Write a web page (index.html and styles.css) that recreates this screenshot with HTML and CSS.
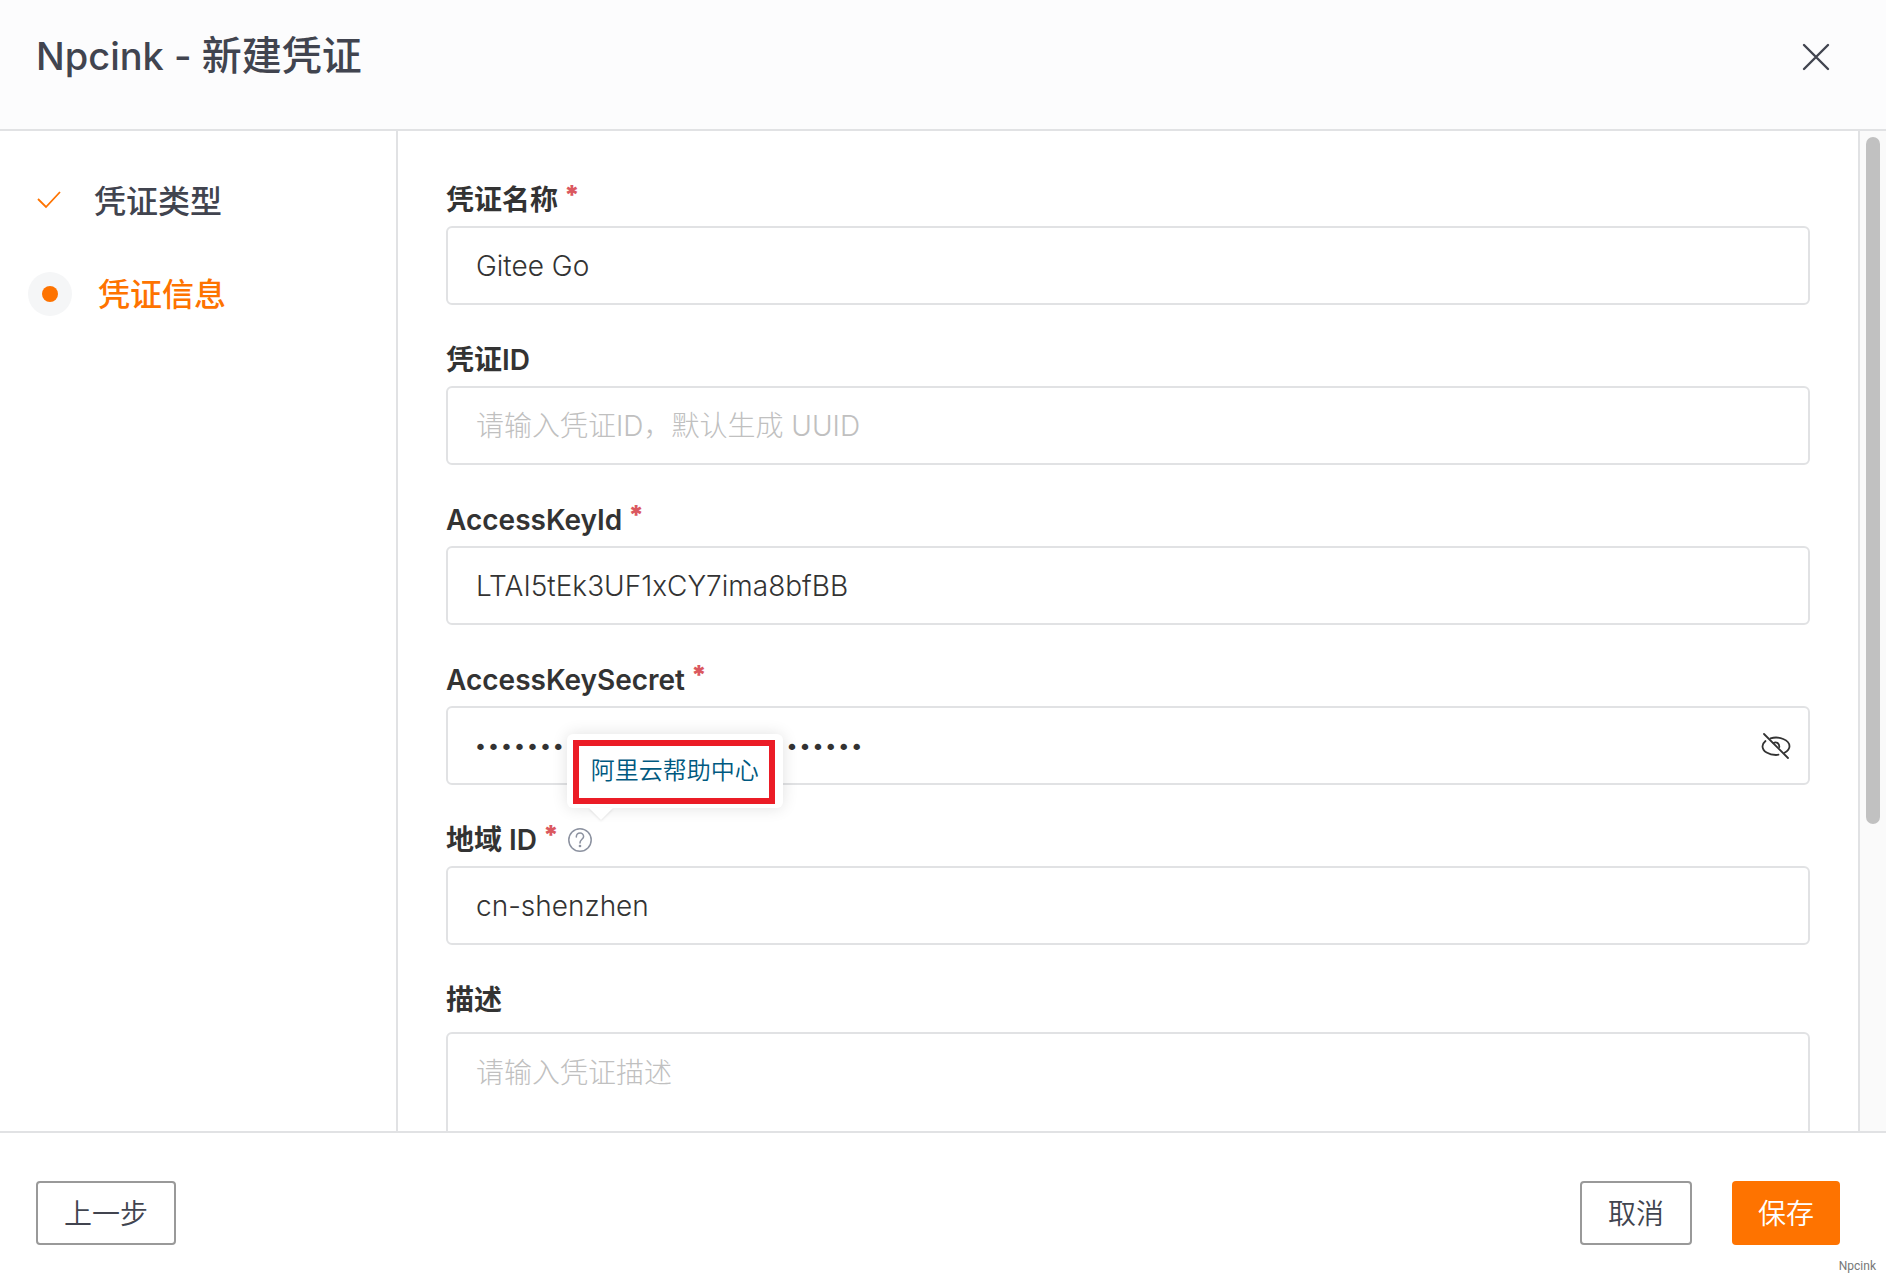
FILE: index.html
```html
<!DOCTYPE html>
<html lang="zh-CN">
<head>
    <meta charset="UTF-8">
    <meta name="viewport" content="width=device-width, initial-scale=1.0">
    <title>Npcink - 新建凭证</title>
    <link rel="stylesheet" href="styles.css">
</head>
<body>
    <div class="dialog">
        <header class="dialog-header">
            <h1><span class="owner">Npcink - </span>新建凭证</h1>
            <button type="button" class="icon-btn" aria-label="关闭">
                <svg width="28" height="30" viewBox="0 0 28 30" fill="none" stroke="#41444f" stroke-width="2.4" stroke-linecap="round">
                    <path d="M2 4L26 28M26 4L2 28"/>
                </svg>
            </button>
        </header>

        <div class="dialog-body">
            <!-- Steps -->
            <nav class="steps">
                <a href="#" class="step done">
                    <span class="step-icon">
                        <svg width="26" height="20" viewBox="0 0 26 20" fill="none" stroke="#fe7300" stroke-width="1.8">
                            <path d="M1 8L9 16L23 1"/>
                        </svg>
                    </span>
                    <span class="step-name">凭证类型</span>
                </a>
                <a href="#" class="step active">
                    <span class="step-icon"><span class="dot"></span></span>
                    <span class="step-name">凭证信息</span>
                </a>
            </nav>

            <!-- Form -->
            <form class="form" id="credential-form">
                <div class="field">
                    <div class="field-label">
                        <label for="name">凭证名称</label><span class="required">*</span>
                    </div>
                    <input type="text" id="name" value="Gitee Go">
                </div>
                <div class="field">
                    <div class="field-label">
                        <label for="credential-id">凭证ID</label>
                    </div>
                    <input type="text" id="credential-id" placeholder="请输入凭证ID，默认生成 UUID">
                </div>
                <div class="field">
                    <div class="field-label">
                        <label for="access-key">AccessKeyId</label><span class="required">*</span>
                    </div>
                    <input type="text" id="access-key" value="LTAI5tEk3UF1xCY7ima8bfBB">
                </div>
                <div class="field">
                    <div class="field-label">
                        <label for="access-secret">AccessKeySecret</label><span class="required">*</span>
                    </div>
                    <div class="password">
                        <input type="password" id="access-secret" value="123456789012345678901234567890">
                        <button type="button" class="icon-btn" aria-label="显示密码">
                            <svg width="30" height="28" viewBox="0 0 30 28" fill="none" stroke="#333" stroke-width="1.8" stroke-linecap="round">
                                <path d="M4.500 9C2.500 10.700 1.500 12.500 1.500 14.200C1.500 19.500 8 23 15 23Q16.500 23 17.500 22.700"/>
                                <path d="M9.500 6.400C18 3.700 28.500 8 28.500 14.200Q28.500 18 23.500 20.700"/>
                                <path d="M12.500 11C15 9.300 18.500 11 18.300 15"/>
                                <path d="M3 2L27 26"/>
                            </svg>
                        </button>
                    </div>
                </div>
                <div class="field">
                    <div class="field-label">
                        <label for="region">地域 ID</label><span class="required">*</span>
                        <span class="help">
                            <svg width="24" height="24" viewBox="0 0 24 24" fill="none" stroke="#8c92a0" stroke-width="1.5" stroke-linecap="round">
                                <circle cx="12" cy="12" r="11.200"/>
                                <path d="M8.300 9C8.500 3.600 15.800 4 15.600 8.600C15.500 11.300 12 11.500 12 15"/>
                                <circle cx="12" cy="18" r="0.600"/>
                            </svg>
                            <span class="tooltip"><a href="#">阿里云帮助中心</a></span>
                        </span>
                    </div>
                    <input type="text" id="region" value="cn-shenzhen">
                </div>
                <div class="field field-desc">
                    <div class="field-label">
                        <label for="description">描述</label>
                    </div>
                    <textarea id="description" placeholder="请输入凭证描述"></textarea>
                </div>
            </form>
            <div class="scrollbar"><div class="thumb"></div></div>
        </div>

        <footer class="dialog-footer">
            <div class="actions">
                <button type="button" class="btn">上一步</button>
                <button type="button" class="btn btn-cancel">取消</button>
                <button type="submit" form="credential-form" class="btn btn-primary">保存</button>
            </div>
            <p class="mark">Npcink</p>
        </footer>
    </div>
</body>
</html>
```
FILE: styles.css
```css
* {
    box-sizing: border-box;
}
body {
    margin: 0;
    background-color: #fff;
    color: #333;
    font-family: Inter, "Noto Sans CJK SC", sans-serif;
    font-size: 28px;
}
.dialog {
    display: flex;
    flex-direction: column;
    height: 100vh;
}
a {
    text-decoration: none;
}
.icon-btn {
    display: flex;
    padding: 0;
    border: 0;
    background: none;
    cursor: pointer;
}

/* Header */
.dialog-header {
    display: flex;
    justify-content: space-between;
    align-items: center;
    padding: 28px 56px 45px 36px;
    background-color: #fcfcfd;
    border-bottom: 2px solid #e1e2e4;
}
.dialog-header h1 {
    margin: 0;
    font-size: 40px;
    line-height: 56px;
    font-weight: 500;
    color: #41444f;
}
.dialog-header .owner {
    font-size: 38px;
}

/* Body */
.dialog-body {
    display: flex;
    flex: 1;
    min-height: 0;
}
.steps {
    display: flex;
    flex-direction: column;
    gap: 49px;
    width: 398px;
    flex-shrink: 0;
    padding: 48px 28px;
    border-right: 2px solid #e1e2e4;
}
.step {
    display: flex;
    align-items: center;
    gap: 22px;
    height: 44px;
    font-size: 32px;
    font-weight: 500;
    color: #41444f;
}
.step.active {
    gap: 26px;
    color: #fe7300;
}
.step-icon {
    display: flex;
    align-items: center;
    justify-content: center;
    width: 44px;
    height: 44px;
    border-radius: 50%;
}
.step.active .step-icon {
    background-color: #f5f6f7;
}
.step-name {
    padding-bottom: 4px;
}
.dot {
    width: 16px;
    height: 16px;
    border-radius: 50%;
    background-color: #fe7300;
}

/* Form */
.form {
    flex: 1;
    padding: 48px;
    overflow-y: auto;
    scrollbar-width: none;
}
.field {
    display: flex;
    flex-direction: column;
    gap: 5px;
    margin-bottom: 34px;
}
.field-desc {
    gap: 11px;
}
.field-label {
    display: flex;
    align-items: center;
    height: 42px;
    line-height: 42px;
    font-weight: 600;
}
.required {
    align-self: flex-start;
    margin-left: 6px;
    font-size: 26px;
    font-weight: 900;
    line-height: 32px;
    color: #db5860;
}
input, textarea {
    width: 100%;
    padding: 0 28px;
    border: 2px solid #e1e2e4;
    border-radius: 6px;
    background-color: #fff;
    color: #333;
    font: inherit;
    font-weight: 300;
    outline: none;
}
input {
    height: 79px;
}
textarea {
    display: block;
    height: 360px;
    padding: 18px 28px;
    line-height: 42px;
    resize: none;
}
::placeholder {
    color: #c0c0c0;
}
.password {
    position: relative;
}
.password input {
    display: block;
    padding: 4px 70px 0 26px;
    font-family: "DejaVu Sans", sans-serif;
    font-size: 22px;
    font-weight: 400;
}
.password .icon-btn {
    position: absolute;
    right: 19px;
    top: 26px;
}
.help {
    position: relative;
    display: flex;
    margin-left: 9px;
}
.tooltip {
    position: absolute;
    left: -1px;
    bottom: 44px;
    padding: 6px 8px 4px 6px;
    border-radius: 6px;
    background-color: #fff;
    box-shadow: 0 0 16px rgba(0, 0, 0, 0.12);
    font-size: 24px;
    font-weight: 350;
    white-space: nowrap;
}
.tooltip::after {
    content: "";
    position: absolute;
    left: 22px;
    top: 100%;
    border: 12px solid transparent;
    border-top-color: #fff;
    filter: drop-shadow(0 1px 1px rgba(0, 0, 0, 0.1));
}
.tooltip a {
    display: block;
    padding: 0 10px 2px 12px;
    border: 6px solid #eb1c26;
    line-height: 50px;
    color: #005980;
}
.scrollbar {
    width: 28px;
    padding: 6px;
    border-left: 2px solid #e1e2e4;
    background-color: #fafafa;
}
.thumb {
    width: 14px;
    height: 69.5%;
    border-radius: 7px;
    background-color: #c1c1c1;
}

/* Footer */
.dialog-footer {
    border-top: 2px solid #e1e2e4;
    padding-top: 48px;
}
.actions {
    display: flex;
    gap: 40px;
    padding: 0 46px 0 36px;
}
.btn {
    height: 64px;
    padding: 0 26px 2px;
    border: 2px solid #999;
    border-radius: 4px;
    background-color: #fff;
    color: #41444f;
    font: inherit;
    font-weight: 350;
    cursor: pointer;
}
.btn-cancel {
    margin-left: auto;
}
.btn-primary {
    border: 0;
    background-color: #fe7300;
    color: #fff;
}
.mark {
    margin: 0;
    padding: 11px 10px 6px;
    text-align: right;
    font-family: Roboto, sans-serif;
    font-size: 12px;
    line-height: 20px;
    color: #777;
}
```
